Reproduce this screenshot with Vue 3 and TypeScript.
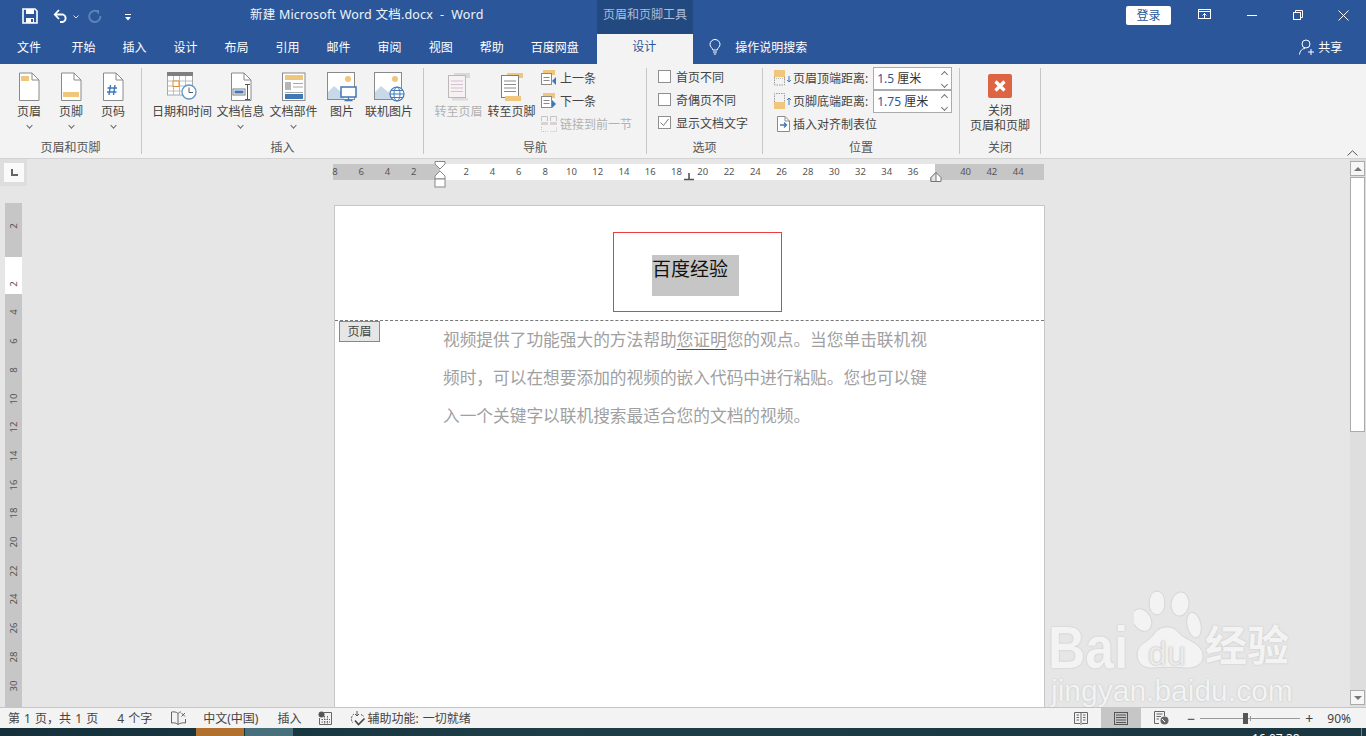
<script setup lang="ts">
// Word 页眉和页脚工具 window
const tabs = ['开始', '插入', '设计', '布局', '引用', '邮件', '审阅', '视图', '帮助', '百度网盘']

const leftNums = [8, 6, 4, 2]
const midNums = [2, 4, 6, 8, 10, 12, 14, 16, 18, 20, 22, 24, 26, 28, 30, 32, 34, 36]
const rightNums = [40, 42, 44]

// ruler zero sits 107px into the horizontal ruler, 26.28px per 2cm
const hStep = 13.14
const hRuler = [
  ...leftNums.map((n) => ({ n, x: 107 - n * hStep })),
  ...midNums.map((n) => ({ n, x: 107 + n * hStep })),
  ...rightNums.map((n) => ({ n, x: 107 + n * hStep })),
]

const vNums = [2, 4, 6, 8, 10, 12, 14, 16, 18, 20, 22, 24, 26, 28, 30]
const vStep = 14.35
const vRuler = [
  { n: 2, y: 17, key: 'top' },
  ...vNums.map((n) => ({ n, y: 46 + n * vStep, key: String(n) })),
]
</script>

<template>
  <div class="word">
    <!-- 标题栏 -->
    <header class="titlebar">
      <div class="qat">
        <svg class="q-save" width="16" height="16" viewBox="0 0 16 16">
          <path d="M1 1H13L15 3V15H1Z" fill="none" stroke="#fff" stroke-width="1.6" />
          <rect x="4" y="1" width="8" height="5" fill="#fff" />
          <rect x="4" y="10" width="8" height="5" fill="#fff" />
          <rect x="9" y="11" width="2" height="3" fill="#2b579a" />
        </svg>
        <svg class="q-undo" width="16" height="14" viewBox="0 0 16 14">
          <path d="M2 5.5H10A4 4 0 0 1 10 13H7" fill="none" stroke="#fff" stroke-width="1.8" />
          <path d="M6 1L1.8 5.5L6 10" fill="none" stroke="#fff" stroke-width="1.8" />
        </svg>
        <svg class="q-drop" width="6" height="4" viewBox="0 0 6 4">
          <path d="M0.5 0.5L3 3L5.5 0.5" fill="none" stroke="#d5dff0" />
        </svg>
        <svg class="q-redo" width="14" height="14" viewBox="0 0 14 14">
          <path d="M9 2.2A5.6 5.6 0 1 0 12.4 7" fill="none" stroke="#5f82b8" stroke-width="1.9" />
          <path d="M6.5 1H11V5.5Z" fill="#5f82b8" />
        </svg>
        <svg class="q-more" width="6" height="7" viewBox="0 0 6 7">
          <path d="M0 0.5H6" stroke="#fff" />
          <path d="M0 3H6L3 6.5Z" fill="#fff" />
        </svg>
      </div>
      <div class="doc-title">新建 Microsoft Word 文档.docx&nbsp; -&nbsp; Word</div>
      <div class="tool-context">页眉和页脚工具</div>
      <div class="login">登录</div>
      <div class="win-buttons">
        <svg width="14" height="12" viewBox="0 0 14 12">
          <rect x="0.5" y="0.5" width="12" height="9" fill="none" stroke="#fff" />
          <path d="M0.5 2.5H12.5" stroke="#fff" />
          <path d="M6.5 9V4.5M4.5 6.5L6.5 4.5L8.5 6.5" fill="none" stroke="#fff" />
        </svg>
        <svg width="10" height="10" viewBox="0 0 10 10"><path d="M0 5.5H10" stroke="#fff" /></svg>
        <svg width="10" height="10" viewBox="0 0 10 10">
          <rect x="0.5" y="2.5" width="7" height="7" fill="none" stroke="#fff" />
          <path d="M2.5 2.5V0.5H9.5V7.5H7.5" fill="none" stroke="#fff" />
        </svg>
        <svg width="11" height="11" viewBox="0 0 11 11"><path d="M0.5 0.5L10.5 10.5M10.5 0.5L0.5 10.5" stroke="#fff" /></svg>
      </div>
    </header>

    <!-- 选项卡 -->
    <nav class="tabbar">
      <span class="tab tab-file">文件</span>
      <span v-for="(t, i) in tabs" :key="i" class="tab">{{ t }}</span>
      <span class="tab-active">设计</span>
      <svg class="bulb" width="12" height="16" viewBox="0 0 12 16">
        <path d="M3.8 11C3.5 8.8 1 8 1 5.5A5 5 0 0 1 11 5.5C11 8 8.5 8.8 8.2 11Z" fill="none" stroke="#fff" />
        <path d="M4 13H8M4.8 15H7.2" stroke="#fff" />
      </svg>
      <span class="tell-me">操作说明搜索</span>
      <div class="share">
        <svg width="16" height="16" viewBox="0 0 16 16">
          <circle cx="7" cy="5" r="4" fill="none" stroke="#fff" />
          <path d="M0.5 15.5C1 11.5 3.5 9.5 6 9.5M9 13H15M12 10V16" fill="none" stroke="#fff" />
        </svg>
        <span>共享</span>
      </div>
    </nav>

    <!-- 功能区 -->
    <section class="ribbon">
      <div class="group g1">
        <div class="group-body">
          <div class="big w42">
            <svg width="22" height="30" viewBox="0 0 22 30">
              <path d="M1.5 1H14L21 8V28.500H1.500Z" fill="#fff" stroke="#8a8a8a" />
              <path d="M14 1V8H21" fill="none" stroke="#8a8a8a" />
              <rect x="3" y="4" width="8" height="5" fill="#efc77c" />
            </svg>
            <span>页眉</span><i class="chev"></i>
          </div>
          <div class="big w42">
            <svg width="22" height="30" viewBox="0 0 22 30">
              <path d="M1.5 1H14L21 8V28.500H1.500Z" fill="#fff" stroke="#8a8a8a" />
              <path d="M14 1V8H21" fill="none" stroke="#8a8a8a" />
              <rect x="3" y="20" width="16" height="5" fill="#efc77c" />
            </svg>
            <span>页脚</span><i class="chev"></i>
          </div>
          <div class="big w42">
            <svg width="22" height="30" viewBox="0 0 22 30">
              <path d="M1.5 1H14L21 8V28.500H1.500Z" fill="#fff" stroke="#8a8a8a" />
              <path d="M14 1V8H21" fill="none" stroke="#8a8a8a" />
              <path d="M8.500 13L7 23M13 13L11.500 23M5.500 16H15M5 20H14.500" fill="none" stroke="#3d78b8" stroke-width="1.400" />
            </svg>
            <span>页码</span><i class="chev"></i>
          </div>
        </div>
        <div class="group-label">页眉和页脚</div>
      </div>

      <div class="group g2">
        <div class="group-body">
          <div class="big w64">
            <svg width="30" height="30" viewBox="0 0 30 30">
              <rect x="0.500" y="1" width="25" height="22" fill="#fff" stroke="#a6a6a6" />
              <rect x="0" y="0" width="26" height="4" fill="#7f7f7f" />
              <path d="M0.500 9H25M0.500 14H25M0.500 19H25M6.500 4V23M12.500 4V23M18.500 4V23" stroke="#bdbdbd" />
              <rect x="6" y="9" width="6" height="5.500" fill="#fff" stroke="#e08a32" />
              <circle cx="22" cy="20" r="7" fill="#fff" stroke="#5b97cc" stroke-width="1.300" />
              <path d="M22 15.500V20.500H26" fill="none" stroke="#5a5a5a" />
            </svg>
            <span>日期和时间</span>
          </div>
          <div class="big w53">
            <svg width="22" height="30" viewBox="0 0 22 30">
              <path d="M1.500 1H14L21 8V28.500H1.500Z" fill="#fff" stroke="#8a8a8a" />
              <path d="M14 1V8H21" fill="none" stroke="#8a8a8a" />
              <rect x="3" y="17" width="12" height="6" fill="#fff" stroke="#7a7a7a" />
              <rect x="4.500" y="18.500" width="9" height="3" fill="#3f78b5" />
              <path d="M15 12.500H20M15 27.500H20M17.500 12.500V27.500" stroke="#555" />
            </svg>
            <span>文档信息</span><i class="chev"></i>
          </div>
          <div class="big w53">
            <svg width="24" height="30" viewBox="0 0 24 30">
              <rect x="0.500" y="1" width="22.500" height="27.500" fill="#fff" stroke="#8a8a8a" />
              <rect x="3" y="3" width="18" height="5" fill="#efc77c" />
              <rect x="3" y="10" width="6" height="8" fill="#b5b5b5" />
              <path d="M11 11.500H21M11 15H21M3 20.500H21" stroke="#a9a9a9" />
              <rect x="3" y="22" width="18" height="5" fill="#3f78b5" />
            </svg>
            <span>文档部件</span><i class="chev"></i>
          </div>
          <div class="big w44">
            <svg width="30" height="30" viewBox="0 0 30 30">
              <rect x="0.500" y="0.500" width="27" height="27" fill="#fff" stroke="#8a8a8a" />
              <circle cx="21" cy="7" r="3" fill="#efc77c" />
              <path d="M1 27V20L7 14L14 20L17 18V27Z" fill="#c8d8e8" />
              <rect x="14" y="15" width="15" height="10" fill="#fff" stroke="#3f78b5" stroke-width="1.500" />
              <path d="M21.500 25V28M17.500 28.500H25.500" stroke="#3f78b5" stroke-width="1.300" />
            </svg>
            <span>图片</span>
          </div>
          <div class="big w50">
            <svg width="31" height="30" viewBox="0 0 31 30">
              <rect x="0.500" y="0.500" width="27" height="27" fill="#fff" stroke="#8a8a8a" />
              <circle cx="21" cy="7" r="3" fill="#efc77c" />
              <path d="M1 27V20L7 14L14 20L17 18V27Z" fill="#c8d8e8" />
              <circle cx="23" cy="22" r="7" fill="#fff" stroke="#3f78b5" stroke-width="1.200" />
              <ellipse cx="23" cy="22" rx="3" ry="7" fill="none" stroke="#3f78b5" />
              <path d="M16 22H30M17 18.500H29M17 25.500H29" stroke="#3f78b5" />
            </svg>
            <span>联机图片</span>
          </div>
        </div>
        <div class="group-label">插入</div>
      </div>

      <div class="group g3">
        <div class="group-body">
          <div class="big w53 disabled">
            <svg width="24" height="30" viewBox="0 0 24 30">
              <rect x="7" y="1" width="16" height="5" fill="#dcd8da" />
              <rect x="1.500" y="3.500" width="17" height="22" fill="#f6f2f4" stroke="#bcb8ba" />
              <path d="M4 9H16M4 12.500H16M4 16H16M4 19.500H16" stroke="#d5bfd0" />
              <rect x="5" y="26" width="16" height="2.500" fill="#dcdcdc" />
            </svg>
            <span>转至页眉</span>
          </div>
          <div class="big w53">
            <svg width="24" height="30" viewBox="0 0 24 30">
              <rect x="7" y="1" width="16" height="5" fill="#efc77c" />
              <rect x="1.500" y="3.500" width="17" height="22" fill="#fff" stroke="#7f7f7f" />
              <path d="M4 9H16M4 12.500H16M4 16H16M4 19.500H16" stroke="#8a8a8a" />
              <rect x="5" y="24" width="16" height="5" fill="#efc77c" />
            </svg>
            <span>转至页脚</span>
          </div>
          <div class="small-col">
            <div class="small-row">
              <svg width="16" height="16" viewBox="0 0 16 16">
                <rect x="2" y="0" width="12" height="5" fill="#efc77c" />
                <rect x="0.500" y="3.500" width="10" height="11" fill="#fff" stroke="#8a8a8a" />
                <path d="M2.500 7.500H8.500M2.500 10.500H8.500" stroke="#8a8a8a" />
                <path d="M15 7V15L11 11Z" fill="#3f78b5" />
              </svg>
              <span>上一条</span>
            </div>
            <div class="small-row">
              <svg width="16" height="16" viewBox="0 0 16 16">
                <rect x="2" y="0" width="12" height="5" fill="#efc77c" />
                <rect x="0.500" y="3.500" width="10" height="11" fill="#fff" stroke="#8a8a8a" />
                <path d="M2.500 7.500H8.500M2.500 10.500H8.500" stroke="#8a8a8a" />
                <path d="M11 7V15L15 11Z" fill="#3f78b5" />
              </svg>
              <span>下一条</span>
            </div>
            <div class="small-row disabled">
              <svg width="16" height="16" viewBox="0 0 16 16">
                <path d="M0.500 5V0.500H6.500V5M9.500 5V0.500H15.500V5" fill="none" stroke="#c4c4c4" />
                <rect x="0" y="6" width="7" height="3" fill="#d8d4d6" />
                <rect x="9" y="6" width="7" height="3" fill="#d8d4d6" />
                <path d="M0.500 11V15.500H6.500M9.500 15.500H15.500V11" fill="none" stroke="#c4c4c4" stroke-dasharray="1 1" />
              </svg>
              <span>链接到前一节</span>
            </div>
          </div>
        </div>
        <div class="group-label">导航</div>
      </div>

      <div class="group g4">
        <div class="group-body checks">
          <label class="check"><i class="box"></i><span>首页不同</span></label>
          <label class="check"><i class="box"></i><span>奇偶页不同</span></label>
          <label class="check">
            <i class="box">
              <svg width="11" height="11" viewBox="0 0 11 11"><path d="M1.500 5.500L4.500 8.500L9.500 2" fill="none" stroke="#777" /></svg>
            </i>
            <span>显示文档文字</span>
          </label>
        </div>
        <div class="group-label">选项</div>
      </div>

      <div class="group g5">
        <div class="group-body pos">
          <div class="pos-row">
            <svg width="17" height="16" viewBox="0 0 17 16">
              <rect x="0" y="0" width="11" height="7" fill="#efc77c" />
              <path d="M0.500 7V15H10.500V7" fill="none" stroke="#9a9a9a" stroke-dasharray="1.500 1" />
              <path d="M0 8.500H11" stroke="#bbb" stroke-dasharray="1 1" />
              <path d="M15 6V12M13 10L15 12L17 10" fill="none" stroke="#3f78b5" />
            </svg>
            <span class="pos-label">页眉顶端距离:</span>
            <div class="spin"><span class="num">1.5</span> <span>厘米</span><i class="spin-arrows"><b class="up"></b><b class="down"></b></i></div>
          </div>
          <div class="pos-row second">
            <svg width="17" height="16" viewBox="0 0 17 16">
              <path d="M0.500 9V0.500H10.500V9" fill="none" stroke="#9a9a9a" stroke-dasharray="1.500 1" />
              <rect x="0" y="9" width="11" height="7" fill="#efc77c" />
              <path d="M15 12V5M13 7L15 5L17 7" fill="none" stroke="#3f78b5" />
            </svg>
            <span class="pos-label">页脚底端距离:</span>
            <div class="spin"><span class="num">1.75</span> <span>厘米</span><i class="spin-arrows"><b class="up"></b><b class="down"></b></i></div>
          </div>
          <div class="pos-row third">
            <svg width="16" height="16" viewBox="0 0 16 16">
              <path d="M2.500 0.500H10L14.500 5V15.500H2.500Z" fill="#fff" stroke="#8a8a8a" />
              <path d="M10 0.500V5H14.500" fill="none" stroke="#8a8a8a" />
              <path d="M5 9H11M9 6.500L11.500 9L9 11.500" fill="none" stroke="#3f78b5" stroke-width="1.300" />
            </svg>
            <span class="pos-label">插入对齐制表位</span>
          </div>
        </div>
        <div class="group-label">位置</div>
      </div>

      <div class="group g6">
        <div class="group-body close-body">
          <svg width="24" height="24" viewBox="0 0 24 24">
            <rect width="24" height="24" rx="2" fill="#de6543" />
            <path d="M7.500 7.500L16.500 16.500M16.500 7.500L7.500 16.500" stroke="#fff" stroke-width="3.200" />
          </svg>
          <span class="close-text">关闭<br />页眉和页脚</span>
        </div>
        <div class="group-label">关闭</div>
      </div>

      <svg class="collapse" width="11" height="6" viewBox="0 0 11 6">
        <path d="M0.500 5.500L5.500 0.800L10.500 5.500" fill="none" stroke="#555" />
      </svg>
    </section>

    <!-- 文档区 -->
    <main class="workspace">
      <aside class="rail">
        <div class="corner"><div class="corner-btn"><i></i></div></div>
        <div class="v-ruler">
          <div class="v-gray-a"></div>
          <div class="v-white"></div>
          <span v-for="m in vRuler" :key="m.key" class="v-num" :style="{ top: m.y + 'px' }">{{ m.n }}</span>
        </div>
      </aside>

      <div class="center">
        <div class="h-ruler">
          <div class="h-white"></div>
          <span v-for="m in hRuler" :key="m.x" class="h-num" :style="{ left: m.x + 'px' }">{{ m.n }}</span>
          <svg class="indent" width="12" height="29" viewBox="0 0 12 29">
            <path d="M1 0.500H11V3L6 8L1 3Z" fill="#fff" stroke="#888" />
            <path d="M6 10L11 15V18H1V15Z" fill="#fff" stroke="#888" />
            <rect x="1" y="18" width="10" height="8" fill="#fff" stroke="#888" />
          </svg>
          <svg class="tabstop" width="10" height="8" viewBox="0 0 10 8">
            <path d="M5 0V6M0 6.500H10" stroke="#555" stroke-width="1.600" />
          </svg>
          <svg class="right-indent" width="12" height="10" viewBox="0 0 12 10">
            <path d="M6 0.500L11 5.500V9.500H1V5.500Z" fill="#fff" stroke="#777" />
            <path d="M6 0.500V9.500H1V5.500Z" fill="#e6e6e6" stroke="#777" />
          </svg>
        </div>

        <article class="page">
          <div class="header-area">
            <div class="header-box">
              <div class="selection">百度经验</div>
            </div>
          </div>
          <div class="header-line">
            <span class="header-tag">页眉</span>
          </div>
          <div class="body-text">
            <p>视频提供了功能强大的方法帮助<span class="grammar">您证明</span>您的观点。当您单击联机视</p>
            <p>频时，可以在想要添加的视频的嵌入代码中进行粘贴。您也可以键</p>
            <p>入一个关键字以联机搜索最适合您的文档的视频。</p>
          </div>
        </article>
      </div>

      <div class="gutter"></div>

      <div class="scrollbar">
        <div class="sb-btn"><i class="sb-up"></i></div>
        <div class="sb-thumb"></div>
        <div class="sb-track"></div>
        <div class="sb-btn"><i class="sb-down"></i></div>
      </div>

      <!-- 水印 -->
      <div class="watermark">
        <svg class="paw" width="76" height="84" viewBox="0 0 76 84">
          <ellipse cx="23" cy="15" rx="8" ry="12" fill="#f3f3f3" stroke="#d6d6d6" />
          <ellipse cx="46" cy="16" rx="9" ry="12" fill="#f3f3f3" stroke="#d6d6d6" transform="rotate(8 46 16)" />
          <ellipse cx="8" cy="32" rx="9" ry="12" fill="#f3f3f3" stroke="#d6d6d6" transform="rotate(-30 8 32)" />
          <ellipse cx="60" cy="37" rx="7" ry="13" fill="#f3f3f3" stroke="#d6d6d6" transform="rotate(-12 60 37)" />
          <path d="M3 66C3 56 14 54 20 46C25 38 38 36 44 44C50 52 68 54 69 67C70 77 60 81 50 80C42 79 30 79 20 80C10 81 3 76 3 66Z" fill="#f3f3f3" stroke="#d6d6d6" />
        </svg>
        <span class="wm-bai">Bai</span>
        <span class="wm-du">du</span>
        <span class="wm-cn">经验</span>
        <span class="wm-url">jingyan.baidu.com</span>
      </div>
    </main>

    <!-- 状态栏 -->
    <footer class="statusbar">
      <span class="st st-page">第 1 页，共 1 页</span>
      <span class="st st-words">4 个字</span>
      <svg class="st-proof" width="15" height="14" viewBox="0 0 15 14">
        <path d="M7 2.500C5.500 1 3 0.500 0.500 1V12C3 11.500 5.500 12 7 13.500V2.500Z" fill="none" stroke="#666" />
        <path d="M7 2.500C8 1.500 9 1 10 0.800M7 13.500C9 12 12 11.500 14.500 12V8" fill="none" stroke="#666" />
        <path d="M10.500 2L14 5.500M14 2L10.500 5.500" stroke="#666" />
      </svg>
      <span class="st st-lang">中文(中国)</span>
      <span class="st st-mode">插入</span>
      <svg class="st-macro" width="14" height="14" viewBox="0 0 14 14">
        <circle cx="3.500" cy="3.500" r="3" fill="#555" />
        <path d="M6 1.500H13.500V13.500H1.500V7" fill="none" stroke="#666" />
        <path d="M3.500 8.500H12M3.500 11H12M6.500 5V13M9.500 5V13" stroke="#666" stroke-dasharray="1.500 1" />
      </svg>
      <svg class="st-a11y" width="17" height="15" viewBox="0 0 17 15">
        <path d="M5 3A6 6 0 0 0 4 12M12 3.500L15 5.500" fill="none" stroke="#555" stroke-dasharray="2 1" />
        <path d="M8 0V5M6 3L8 5L10 3" fill="none" stroke="#555" />
        <path d="M6 9.500L9.500 13.500L15.500 7.500" fill="none" stroke="#444" stroke-width="1.600" />
      </svg>
      <span class="st st-a11y-text">辅助功能: 一切就绪</span>

      <div class="view-icons">
        <svg width="14" height="13" viewBox="0 0 14 13">
          <path d="M0.500 0.500H13.500V11.500H8L7 12.500L6 11.500H0.500Z" fill="none" stroke="#666" />
          <path d="M7 0.500V11.500M2.500 3H5M2.500 5.500H5M2.500 8H5M9 3H11.500M9 5.500H11.500M9 8H11.500" stroke="#666" />
        </svg>
        <div class="view-active">
          <svg width="14" height="13" viewBox="0 0 14 13">
            <rect x="0.500" y="0.500" width="13" height="12" fill="none" stroke="#555" />
            <path d="M2 3H12M2 5.500H12M2 8H12M2 10.500H12" stroke="#555" />
          </svg>
        </div>
        <svg width="15" height="14" viewBox="0 0 15 14">
          <path d="M0.500 0.500H10.500V5M5 12.500H0.500V0.500" fill="none" stroke="#666" />
          <path d="M2.500 3H8.500M2.500 5.500H7M2.500 8H5" stroke="#666" />
          <circle cx="10.500" cy="9.500" r="4" fill="#666" />
          <path d="M8 8L11 11" stroke="#fff" />
        </svg>
      </div>
      <div class="zoom">
        <span class="z-sign">−</span>
        <div class="z-slider"><i class="z-mid"></i><i class="z-thumb"></i></div>
        <span class="z-sign">+</span>
        <span class="z-val">90%</span>
      </div>
    </footer>

    <!-- 任务栏（被截断） -->
    <div class="taskbar">
      <i class="tb-orange"></i>
      <i class="tb-blue"></i>
      <span class="tb-clock">16:07:38</span>
      <i class="tb-edge"></i>
    </div>
  </div>
</template>

<style scoped>
.word {
  width: 1366px;
  height: 736px;
  display: flex;
  flex-direction: column;
  overflow: hidden;
  position: relative;
  font-family: "Noto Sans", "Noto Sans CJK SC", sans-serif;
  font-size: 12px;
  color: #444;
  background: #e6e6e6;
}
.titlebar {
  height: 34px;
  flex: none;
  background: #2b579a;
  display: flex;
  color: #fff;
}
.qat {
  width: 250px;
  flex: none;
  display: flex;
  align-items: center;
}
.q-save { margin: 0 0 2px 22px; }
.q-undo { margin: 0 0 2px 15px; }
.q-drop { margin: 0 0 0 4px; }
.q-redo { margin: 0 0 2px 9px; }
.q-more { margin: 1px 0 0 23px; }
.doc-title {
  width: 347px;
  flex: none;
  line-height: 30px;
  font-size: 12.5px;
  color: #f0f4fa;
  letter-spacing: 0.21px;
}
.tool-context {
  width: 96px;
  flex: none;
  background: #234a80;
  color: #a9bedb;
  text-align: center;
  line-height: 30px;
}
.login {
  margin: 6px 0 0 433px;
  width: 46px;
  height: 19px;
  background: #fff;
  border-radius: 2px;
  color: #2b579a;
  text-align: center;
  line-height: 19px;
}
.win-buttons {
  width: 171px;
  margin-left: 27px;
  height: 30px;
  display: flex;
  align-items: center;
  justify-content: space-between;
  padding-right: 17px;
  box-sizing: border-box;
}
.tabbar {
  height: 30px;
  flex: none;
  background: #2b579a;
  display: flex;
  align-items: center;
  color: #fff;
}
.tab {
  padding: 0 13.5px;
  white-space: nowrap;
  margin-top: -4px;
}
.tab-file { padding: 0 17px; }
.tab-active {
  margin-left: 5px;
  width: 94px;
  padding-right: 2px;
  height: 30px;
  background: #f3f3f3;
  color: #2b579a;
  text-align: center;
  line-height: 26px;
}
.bulb { margin: -4px 0 0 16px; }
.tell-me { margin: -4px 0 0 14px; }
.share {
  margin: -4px 0 0 492px;
  display: flex;
  align-items: center;
  gap: 3px;
}
.ribbon {
  height: 95px;
  flex: none;
  box-sizing: border-box;
  background: #f3f3f3;
  border-bottom: 1px solid #d2d2d2;
  padding-top: 4px;
  display: flex;
  position: relative;
  color: #444;
}
.group {
  height: 86px;
  flex: none;
  box-sizing: border-box;
  border-right: 1px solid #c6c6c6;
  display: flex;
  flex-direction: column;
}
.g1 { width: 142px; }
.g2 { width: 282px; }
.g3 { width: 223px; }
.g4 { width: 116px; }
.g5 { width: 197px; }
.g6 { width: 81px; }
.group-body {
  height: 70px;
  flex: none;
  display: flex;
}
.g1 .group-body, .g2 .group-body, .g3 .group-body { padding-left: 8px; }
.group-label {
  flex: 1;
  text-align: center;
  line-height: 19px;
  color: #555;
}
.big {
  display: flex;
  flex-direction: column;
  align-items: center;
  padding-top: 4px;
  box-sizing: border-box;
  white-space: nowrap;
}
.big svg { flex: none; height: 30px; }
.big span { line-height: 16px; margin-top: 2px; }
.w42 { width: 42px; }
.w44 { width: 44px; }
.w50 { width: 50px; }
.w53 { width: 53px; }
.w64 { width: 64px; }
.chev {
  width: 4px;
  height: 4px;
  margin-top: 3px;
  border-right: 1px solid #666;
  border-bottom: 1px solid #666;
  transform: rotate(45deg) scale(0.9);
}
.disabled { color: #b1b1b1; }
.small-col {
  margin: -2px 0 0 3px;
  display: flex;
  flex-direction: column;
}
.small-row {
  height: 23px;
  display: flex;
  align-items: center;
  gap: 3px;
  white-space: nowrap;
}
.checks {
  flex-direction: column;
  padding: 0 0 0 11px;
  margin-top: -3px;
  height: 73px;
}
.check {
  height: 23px;
  display: flex;
  align-items: center;
  gap: 5px;
}
.box {
  width: 11px;
  height: 11px;
  border: 1px solid #8f8f8f;
  background: #fff;
  display: flex;
}
.pos {
  flex-direction: column;
  padding-left: 11px;
  margin-top: -1px;
  height: 71px;
}
.pos-row {
  height: 22px;
  display: flex;
  align-items: center;
  white-space: nowrap;
}
.pos-row.second { margin-top: 1px; }
.pos-row.third { margin-top: 1px; padding-left: 1px; }
.pos-label { margin-left: 2px; }
.spin {
  margin-left: 5px;
  width: 79px;
  height: 23px;
  box-sizing: border-box;
  border: 1px solid #ababab;
  background: #fff;
  line-height: 21px;
  padding-left: 3px;
  position: relative;
  color: #333;
  white-space: pre;
}
.num { color: #2b579a; }
.spin-arrows {
  position: absolute;
  right: 4px;
  top: 4px;
  display: flex;
  flex-direction: column;
  gap: 5px;
}
.spin-arrows b {
  display: block;
  width: 4px;
  height: 4px;
  border-left: 1px solid #777;
  border-top: 1px solid #777;
}
.spin-arrows .up { transform: rotate(45deg); }
.spin-arrows .down { transform: rotate(225deg); }
.close-body {
  flex-direction: column;
  align-items: center;
  padding-top: 6px;
  box-sizing: border-box;
}
.close-text {
  margin-top: 5px;
  text-align: center;
  line-height: 15px;
  white-space: nowrap;
}
.collapse {
  position: absolute;
  right: 8px;
  bottom: 2px;
}
.workspace {
  flex: 1;
  min-height: 0;
  display: flex;
  position: relative;
  background: #e6e6e6;
}
.rail {
  width: 333px;
  flex: none;
}
.corner {
  width: 27px;
  height: 27px;
  box-sizing: border-box;
  background: #dedede;
  padding: 4px;
}
.corner-btn {
  width: 20px;
  height: 19px;
  background: #fafafa;
  position: relative;
}
.corner-btn i {
  position: absolute;
  left: 7px;
  top: 6px;
  width: 5px;
  height: 5px;
  border-left: 2px solid #666;
  border-bottom: 2px solid #666;
}
.v-ruler {
  margin: 17px 0 0 5px;
  width: 17px;
  height: 504px;
  background: #c6c6c6;
  position: relative;
  overflow: hidden;
}
.v-gray-a { height: 54px; }
.v-white { height: 37px; background: #fff; }
.v-num {
  position: absolute;
  left: 0;
  width: 17px;
  text-align: center;
  font-size: 9.500px;
  line-height: 12px;
  color: #555;
  transform: rotate(-90deg);
}
.center {
  width: 711px;
  flex: none;
  padding-top: 5px;
  box-sizing: border-box;
}
.h-ruler {
  height: 16px;
  background: #c6c6c6;
  position: relative;
  padding-left: 107px;
}
.h-white {
  width: 495px;
  height: 16px;
  background: #fff;
}
.h-num {
  position: absolute;
  top: 0;
  width: 20px;
  margin-left: -10px;
  text-align: center;
  font-size: 9.500px;
  line-height: 16px;
  color: #555;
}
.indent { position: absolute; left: 101px; top: -3px; }
.tabstop { position: absolute; left: 351px; top: 9px; }
.right-indent { position: absolute; left: 597px; top: 8px; }
.page {
  margin: 25px 0 0 1px;
  width: 711px;
  height: 502px;
  box-sizing: border-box;
  background: #fff;
  border: 1px solid #c6c6c6;
  border-bottom: none;
  color: #a0a0a0;
}
.header-area {
  height: 114px;
  box-sizing: border-box;
  padding: 26px 0 0 278px;
}
.header-box {
  width: 169px;
  height: 80px;
  box-sizing: border-box;
  border: 1px solid #ee3b3b;
  padding: 22px 0 0 38px;
}
.selection {
  width: 87px;
  height: 41px;
  background: #c6c6c6;
  color: #111;
  font-size: 19px;
  line-height: 29px;
  white-space: nowrap;
}
.header-line {
  height: 0;
  border-top: 1px dashed #777;
  position: relative;
}
.header-tag {
  position: absolute;
  left: 4px;
  top: 0;
  width: 41px;
  height: 21px;
  box-sizing: border-box;
  border: 1px solid #888;
  background: #e6e6e6;
  text-align: center;
  line-height: 19px;
  color: #444;
}
.body-text {
  padding: 0 0 0 108px;
  margin-top: 0;
  font-size: 16.700px;
  line-height: 38px;
  white-space: nowrap;
}
.body-text p { margin: 0; }
.grammar {
  text-decoration: underline;
  text-decoration-color: #2b579a;
  text-underline-offset: 3px;
}
.gutter { flex: 1; }
.scrollbar {
  width: 16px;
  flex: none;
  background: #dedede;
  padding-top: 2px;
  box-sizing: border-box;
  display: flex;
  flex-direction: column;
  align-items: flex-start;
}
.sb-btn {
  width: 15px;
  height: 15px;
  box-sizing: border-box;
  border: 1px solid #ababab;
  background: #f6f6f6;
  display: flex;
  align-items: center;
  justify-content: center;
  flex: none;
}
.sb-up {
  border-left: 4px solid transparent;
  border-right: 4px solid transparent;
  border-bottom: 4px solid #777;
}
.sb-down {
  border-left: 4px solid transparent;
  border-right: 4px solid transparent;
  border-top: 4px solid #777;
}
.sb-thumb {
  width: 15px;
  height: 255px;
  margin-top: 1px;
  box-sizing: border-box;
  border: 1px solid #ababab;
  background: #fff;
  flex: none;
}
.sb-track { flex: 1; }
.scrollbar .sb-btn:last-child { margin-bottom: 2px; }
.watermark {
  position: absolute;
  left: 1048px;
  top: 425px;
  width: 250px;
  height: 124px;
  color: #f3f3f3;
  font-family: "Liberation Sans", sans-serif;
  text-shadow: 0 0 2px #bdbdbd;
}
.paw { position: absolute; left: 86px; top: 4px; }
.wm-bai {
  position: absolute;
  left: 0;
  top: 36px;
  font-size: 60px;
  font-weight: 700;
  line-height: 56px;
  transform: scaleX(0.86);
  transform-origin: left center;
}
.wm-du {
  position: absolute;
  left: 100px;
  top: 52px;
  font-size: 34px;
  line-height: 34px;
  color: #ebebeb;
  text-shadow: 0 0 2px #a9a9a9;
}
.wm-cn {
  position: absolute;
  left: 157px;
  top: 34px;
  font-family: "Noto Sans CJK SC", sans-serif;
  font-weight: 700;
  font-size: 42px;
  line-height: 50px;
  white-space: nowrap;
}
.wm-url {
  position: absolute;
  left: 3px;
  top: 93px;
  font-size: 30px;
  line-height: 28px;
  white-space: nowrap;
}
.statusbar {
  height: 20px;
  flex: none;
  background: #f3f3f3;
  border-top: 1px solid #c6c6c6;
  box-sizing: content-box;
  display: flex;
  align-items: center;
  color: #444;
  font-size: 12px;
  white-space: nowrap;
}
.st { word-spacing: 1px; }
.st-page { margin-left: 8px; }
.st-words { margin-left: 19px; }
.st-proof { margin-left: 19px; }
.st-lang { margin-left: 17px; }
.st-mode { margin-left: 19px; }
.st-macro { margin-left: 17px; }
.st-a11y { margin-left: 17px; }
.st-a11y-text { margin-left: 1px; }
.view-icons {
  margin-left: auto;
  display: flex;
  align-items: center;
}
.view-active {
  width: 40px;
  height: 20px;
  background: #c6c6c6;
  display: flex;
  align-items: center;
  justify-content: center;
}
.view-icons > svg:first-child { margin-right: 13px; }
.view-icons > svg:last-child { margin-left: 13px; }
.zoom {
  display: flex;
  align-items: center;
  margin: 0 15px 0 17px;
}
.z-sign { width: 10px; text-align: center; font-size: 14px; }
.z-slider {
  width: 100px;
  height: 1px;
  background: #999;
  margin: 0 4px;
  position: relative;
}
.z-mid {
  position: absolute;
  left: 50px;
  top: -2px;
  width: 1px;
  height: 5px;
  background: #999;
}
.z-thumb {
  position: absolute;
  left: 43px;
  top: -5px;
  width: 5px;
  height: 11px;
  background: #555;
}
.z-val { margin-left: 13px; font-size: 12px; }
.taskbar {
  height: 8px;
  flex: none;
  background: linear-gradient(90deg, #15303a, #1d3d47 40%, #1a3640);
  position: relative;
  overflow: hidden;
}
.tb-orange {
  position: absolute;
  left: 196px;
  width: 48px;
  height: 8px;
  background: #b2702f;
}
.tb-blue {
  position: absolute;
  left: 245px;
  width: 48px;
  height: 8px;
  background: #47707c;
}
.tb-clock {
  position: absolute;
  left: 1252px;
  top: 4px;
  font-size: 12px;
  line-height: 14px;
  color: #fff;
}
.tb-edge {
  position: absolute;
  left: 1361px;
  width: 1px;
  height: 8px;
  background: #6f8790;
}
</style>

<style>
html, body {
  margin: 0;
  overflow: hidden;
}
</style>
